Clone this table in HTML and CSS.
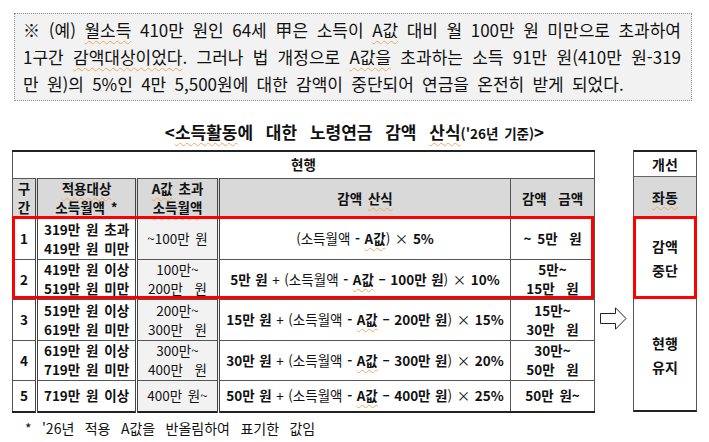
FILE: index.html
```html
<!DOCTYPE html>
<html lang="ko">
<head>
<meta charset="utf-8">
<link rel="stylesheet" href="styles.css">
</head>
<body>
<div class="note">
  <p class="ln">※ (예) <span class="sp">월소득</span> 410만 원인 64세 甲은 소득이 <span class="sp">A값</span> 대비 월 100만 원 미만으로 초과하여</p>
  <p class="ln">1구간 <span class="sp">감액대상이었다</span>. 그러나 법 개정으로 <span class="sp">A값을</span> 초과하는 소득 91만 원(410만 원-319</p>
  <p class="ln last">만 원)의 5%인 4만 5,500원에 대한 감액이 중단되어 연금을 온전히 받게 되었다.</p>
</div>

<h2 class="title">&lt;<span class="sp">소득활동</span>에 대한 노령연금 감액 <span class="sp">산식</span><small>('26년 기준)</small>&gt;</h2>

<div class="tables">
  <div class="main-wrap">
    <table class="main">
      <colgroup>
        <col class="c1"><col class="c2"><col class="c3"><col class="c4"><col class="c5">
      </colgroup>
      <tr class="r-top">
        <th colspan="5">현행</th>
      </tr>
      <tr class="r-head">
        <th class="dbl">구<br>간</th>
        <th class="dbl"><span class="sp">적용대상</span><br>소득월액 *</th>
        <th class="dbl"><span class="sp">A값</span> 초과<br><span class="sp">소득월액</span></th>
        <th>감액 <span class="sp">산식</span></th>
        <th>감액&nbsp; 금액</th>
      </tr>
      <tr class="r-a">
        <td class="dbl b">1</td>
        <td class="dbl b">319만 원 초과<br>419만 원 미만</td>
        <td class="dbl g">~100만 원</td>
        <td class="f">(소득월액 <b>- <span class="sp">A값</span></b>) × <b>5%</b></td>
        <td class="b">~ 5만&nbsp; 원</td>
      </tr>
      <tr class="r-b">
        <td class="dbl b">2</td>
        <td class="dbl b">419만 원 이상<br>519만 원 미만</td>
        <td class="dbl g">100만~<br>200만&nbsp; 원</td>
        <td class="f"><b>5만 원</b> + (소득월액 <b>- <span class="sp">A값</span> – 100만 원</b>) × <b>10%</b></td>
        <td class="b">5만~<br>15만&nbsp; 원</td>
      </tr>
      <tr class="r-a">
        <td class="dbl b">3</td>
        <td class="dbl b">519만 원 이상<br>619만 원 미만</td>
        <td class="dbl g">200만~<br>300만&nbsp; 원</td>
        <td class="f"><b>15만 원</b> + (소득월액 <b>- <span class="sp">A값</span> – 200만 원</b>) × <b>15%</b></td>
        <td class="b">15만~<br>30만&nbsp; 원</td>
      </tr>
      <tr class="r-b">
        <td class="dbl b">4</td>
        <td class="dbl b">619만 원 이상<br>719만 원 미만</td>
        <td class="dbl g">300만~<br>400만&nbsp; 원</td>
        <td class="f"><b>30만 원</b> + (소득월액 <b>- <span class="sp">A값</span> – 300만 원</b>) × <b>20%</b></td>
        <td class="b">30만~<br>50만&nbsp; 원</td>
      </tr>
      <tr class="r-c">
        <td class="dbl b">5</td>
        <td class="dbl b">719만 원 이상</td>
        <td class="dbl g">400만 원~</td>
        <td class="f"><b>50만 원</b> + (소득월액 <b>- <span class="sp">A값</span> – 400만 원</b>) × <b>25%</b></td>
        <td class="b">50만 원~</td>
      </tr>
    </table>
    <div class="hl"></div>
  </div>

  <div class="arrow">
    <svg width="27" height="23" viewBox="0 0 27 23">
      <path d="M0.5 6.5 H15.5 V0.8 L26 11.5 L15.5 22.2 V16.5 H0.5 Z" fill="#fff" stroke="#222" stroke-width="1"/>
    </svg>
  </div>

  <div class="side">
    <div class="s-h">개선</div>
    <div class="s-g"><span class="sp">좌동</span></div>
    <div class="s-r">감액<br>중단</div>
    <div class="s-k">현행<br>유지</div>
  </div>
</div>

<p class="foot">* '26년 적용 <span class="sp">A값을</span> 반올림하여 표기한 값임</p>
</body>
</html>
```

FILE: styles.css
```css
* {
  box-sizing: border-box;
}

body {
  margin: 0;
  width: 709px;
  background: #fff;
  color: #111;
  font-family: "Noto Sans CJK KR", "Noto Sans", sans-serif;
}

.sp {
  text-decoration: underline wavy #f0a860;
  text-decoration-thickness: 1px;
  text-underline-offset: 3px;
}

/* example note */
.note {
  margin: 13px 0 0 14px;
  width: 678px;
  height: 88px;
  padding: 2px 10px 0 8px;
  border: 1px dotted #8c8c8c;
  background: #f2f2f2;
  font-size: 17px;
  line-height: 27px;
  word-spacing: 3.5px;
}

.ln {
  margin: 0;
  text-align: justify;
  text-align-last: justify;
  white-space: nowrap;
}

.ln.last {
  text-align-last: left;
}

/* title */
.title {
  margin: 0;
  padding-top: 13px;
  height: 49px;
  line-height: 36px;
  font-size: 17px;
  font-weight: 700;
  text-align: center;
  word-spacing: 8px;
}

.title small {
  font-size: 13.5px;
  word-spacing: 2px;
}

/* tables area */
.tables {
  display: flex;
  margin-left: 12px;
}

.main-wrap {
  position: relative;
  width: 582px;
}

.main {
  width: 582px;
  border-collapse: collapse;
  table-layout: fixed;
  font-size: 13.5px;
  line-height: 19px;
  word-spacing: 2px;
}

.c1 { width: 24px; }
.c2 { width: 100px; }
.c3 { width: 82px; }
.c4 { width: 292px; }
.c5 { width: 84px; }

.main th,
.main td {
  padding: 0;
  text-align: center;
  vertical-align: middle;
  border: 1px solid #555;
  white-space: nowrap;
}

.main th {
  font-weight: 700;
}

.r-top th {
  height: 27px;
  border-top: 2px solid #222;
  background: #fff;
}

.r-head th {
  height: 40px;
  background: #d9d9d9;
}

.main .dbl {
  border-right: 3px double #444;
}

.r-a td { height: 41px; }
.r-b td { height: 40px; }
.r-c td {
  height: 32px;
  border-bottom: 2px solid #222;
}

.b {
  font-weight: 700;
}

.g {
  background: #f2f2f2;
  font-weight: 400;
}

.main .f {
  font-weight: 400;
  word-spacing: 0.8px;
}

.f b {
  font-weight: 700;
}

.hl {
  position: absolute;
  left: 0;
  top: 66px;
  width: 582px;
  height: 83px;
  border: 3px solid #ff0000;
}

/* arrow */
.arrow {
  width: 39px;
  padding: 157px 0 0 6px;
}

.arrow svg {
  display: block;
}

/* improvement column */
.side {
  display: flex;
  flex-direction: column;
  width: 64px;
  height: 262px;
  border: 1px solid #555;
  border-top: 2px solid #222;
  border-bottom: 2px solid #222;
  font-size: 14px;
  font-weight: 700;
  line-height: 24px;
  text-align: center;
}

.s-h {
  height: 25px;
  line-height: 24px;
  border-bottom: 1px solid #666;
}

.s-g {
  height: 39px;
  display: flex;
  align-items: center;
  justify-content: center;
  background: #d9d9d9;
}

.s-r {
  height: 83px;
  margin: 0 -1px;
  display: flex;
  align-items: center;
  justify-content: center;
  border: 3px solid #ff0000;
}

.s-k {
  flex: 1;
  display: flex;
  align-items: center;
  justify-content: center;
}

/* footnote */
.foot {
  margin: 5px 0 0 25px;
  font-size: 14px;
  line-height: 20px;
  word-spacing: 6.5px;
}
```
